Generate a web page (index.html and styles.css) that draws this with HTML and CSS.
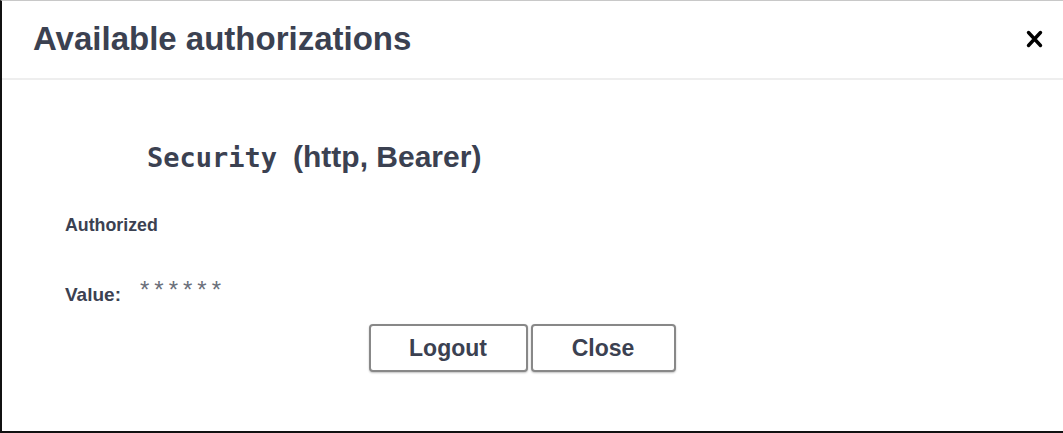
FILE: index.html
```html
<!DOCTYPE html>
<html>
<head>
<meta charset="utf-8">
<link rel="stylesheet" href="styles.css">
</head>
<body>
<div class="modal">
  <div class="modal-header">
    <h3 class="title">Available authorizations</h3>
    <button class="close-x" aria-label="close">
      <svg width="17" height="18" viewBox="0 0 17 18"><path d="M2.5 2.5 L14.5 15.5 M14.5 2.5 L2.5 15.5" stroke="#000" stroke-width="3.4" stroke-linecap="round"/></svg>
    </button>
  </div>
  <div class="modal-body">
    <h4 class="scheme"><code class="scheme-name">Security</code><span class="scheme-type">(http, Bearer)</span></h4>
    <div class="status">Authorized</div>
    <div class="value-row"><label class="value-label">Value:</label><span class="value-mask">******</span></div>
    <div class="actions">
      <button class="btn">Logout</button>
      <button class="btn btn-close">Close</button>
    </div>
  </div>
</div>
</body>
</html>
```
FILE: styles.css
```css
html, body {
  margin: 0;
  padding: 0;
  background: #fff;
}
body {
  font-family: "Liberation Sans", Arial, sans-serif;
  color: #3b4151;
}
.modal {
  box-sizing: border-box;
  width: 1063px;
  height: 433px;
  border-top: 1px solid #c8c8c8;
  border-left: 2px solid #111;
  border-bottom: 2px solid #111;
  background: #fff;
}
.modal-header {
  box-sizing: border-box;
  height: 79px;
  display: flex;
  align-items: center;
  justify-content: space-between;
  padding: 0 19px 0 31px;
  border-bottom: 2px solid #eeeeee;
}
.title {
  margin: 0;
  font-size: 33px;
  font-weight: bold;
  color: #3b4151;
  padding-bottom: 2px;
}
.close-x {
  border: 0;
  background: none;
  padding: 0;
  width: 19px;
  height: 20px;
  display: flex;
  align-items: center;
  justify-content: center;
  cursor: pointer;
  margin-bottom: 2px;
}
.modal-body {
  padding: 60px 0 0 63px;
}
.scheme {
  margin: 0 0 0 82px;
  display: flex;
  align-items: baseline;
  gap: 16px;
  font-weight: bold;
  line-height: 34px;
}
.scheme-name {
  font-family: "DejaVu Sans Mono", monospace;
  font-size: 27px;
  font-weight: bold;
  color: #3b4151;
}
.scheme-type {
  font-size: 30px;
  color: #3b4151;
}
.status {
  margin-top: 40px;
  font-size: 17.8px;
  font-weight: bold;
  color: #3b4151;
}
.value-row {
  margin-top: 43px;
  display: flex;
  align-items: baseline;
  gap: 19px;
}
.value-label {
  font-size: 19px;
  font-weight: bold;
  color: #3b4151;
}
.value-mask {
  font-size: 24px;
  color: #6b6f7a;
  letter-spacing: 5px;
  position: relative;
  top: -3px;
}
.actions {
  display: flex;
  justify-content: center;
  gap: 3px;
  margin-top: 17px;
  margin-left: -63px;
  padding-right: 21px;
}
.btn {
  box-sizing: border-box;
  height: 48px;
  width: 159px;
  border: 2px solid #888;
  border-radius: 4px;
  background: #fff;
  box-shadow: 0 1px 2px rgba(0,0,0,0.25);
  font-family: "Liberation Sans", Arial, sans-serif;
  font-size: 23px;
  font-weight: bold;
  color: #3b4151;
}
.btn-close {
  width: 145px;
}
```
